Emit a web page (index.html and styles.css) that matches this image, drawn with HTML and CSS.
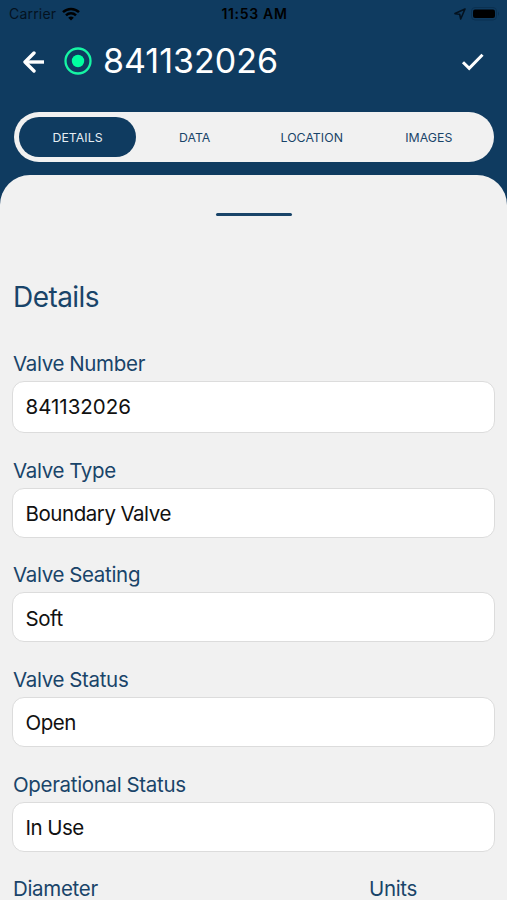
FILE: index.html
```html
<!DOCTYPE html>
<html lang="en">
<head>
<meta charset="utf-8">
<title>Valve 841132026</title>
<link rel="stylesheet" href="styles.css">
</head>
<body>
<div class="status-bar">
  <div class="carrier"><span>Carrier</span>
    <svg width="18" height="14" viewBox="0 0 18 14" fill="none" stroke="#000" stroke-width="2.5"><path d="M1 5.2C5.5.9 12.500.9 17 5.200M4 8.300C6.800 5.600 11.200 5.600 14 8.300"/><path d="M6.200 10.700Q9 8.300 11.800 10.700L9 13.600Z" fill="#000" stroke="none"/></svg>
  </div>
  <div class="clock">11:53 AM</div>
  <div class="indicators">
    <svg width="12" height="12" viewBox="0 0 12 12" fill="none" stroke="#04121f" stroke-width="1.600" stroke-linejoin="round"><path d="M11 1L1 5.600L5.700 6.300L6.700 11Z"/></svg>
    <svg class="battery" width="29" height="14" viewBox="0 0 29 14"><rect x=".5" y=".5" width="25" height="12.500" rx="3.500" fill="none" stroke="#0b3151"/><rect x="2" y="2.500" width="22" height="8.500" rx="2" fill="#000"/><path d="M27 4.500Q29 6.700 27 9Z" fill="#0b3151"/></svg>
  </div>
</div>
<header class="title-bar">
  <svg class="back" width="22" height="22" viewBox="0 0 22 22" fill="none" stroke="#fff" stroke-width="3.400" stroke-linecap="round" stroke-linejoin="round"><path d="M12 2L3 11L12 20"/><path d="M3.500 11H22" stroke-linecap="butt"/></svg>
  <svg class="state" width="28" height="30" viewBox="0 0 28 30"><circle cx="14" cy="14" r="12.500" fill="none" stroke="#16f5a4" stroke-width="2.300"/><circle cx="14" cy="14" r="6.200" fill="#00ffa0"/></svg>
  <h1>841132026</h1>
  <svg class="check" width="24" height="20" viewBox="0 0 24 20" fill="none" stroke="#fff" stroke-width="3"><path d="M2 10.200L8.200 16.300L21.500 2.700"/></svg>
</header>
<nav class="tabs">
  <a class="tab active">DETAILS</a><a class="tab">DATA</a><a class="tab">LOCATION</a><a class="tab">IMAGES</a>
</nav>
<main class="sheet">
  <div class="handle"></div>
  <h2>Details</h2>
  <div class="field first"><label>Valve Number</label><div class="value number">841132026</div></div>
  <div class="field"><label>Valve Type</label><div class="value">Boundary Valve</div></div>
  <div class="field"><label>Valve Seating</label><div class="value">Soft</div></div>
  <div class="field"><label>Valve Status</label><div class="value">Open</div></div>
  <div class="field"><label>Operational Status</label><div class="value">In Use</div></div>
  <div class="split"><label>Diameter</label><label>Units</label></div>
</main>
</body>
</html>
```
FILE: styles.css
```css
* { box-sizing: border-box; }
body {
  margin: 0;
  height: 900px;
  overflow: hidden;
  display: flex;
  flex-direction: column;
  background: #0f3b60;
  color: #194469;
  font-family: Inter, "Liberation Sans", sans-serif;
}
svg { display: block; flex: none; }
.status-bar {
  height: 27px;
  flex: none;
  display: grid;
  grid-template-columns: 1fr auto 1fr;
  align-items: center;
  padding: 0 7px 0 9px;
  color: #000;
  font-size: 14px;
}
.carrier { display: flex; align-items: center; gap: 6px; color: #04121f; }
.carrier span { letter-spacing: 0.2px; }
.clock { font-weight: 600; letter-spacing: 0.7px; }
.indicators { display: flex; justify-content: flex-end; align-items: center; gap: 5px; }
.title-bar {
  height: 85px;
  flex: none;
  display: flex;
  align-items: center;
  padding: 0 22px 16px;
}
.state { margin-left: 20px; }
h1 {
  margin: -2px auto 0 11px;
  color: #fff;
  font-size: 34px;
  line-height: 40px;
  font-weight: 400;
  letter-spacing: 0;
}
.tabs {
  height: 50px;
  flex: none;
  display: grid;
  grid-template-columns: repeat(4, 117.1px);
  margin: 0 13px 0 14px;
  padding: 5px;
  border-radius: 25px;
  background: #f1f1f1;
  font-size: 12.3px;
  letter-spacing: 0.05px;
}
.tab { display: flex; align-items: center; justify-content: center; border-radius: 20px; }
.active { background: #0f3b60; color: #e6edf3; }
.sheet {
  margin-top: 13px;
  height: 725px;
  flex: none;
  padding: 38px 12px 0;
  border-radius: 30px 30px 0 0;
  background: #f1f1f1;
}
.handle { width: 76px; height: 3px; margin: 0 auto; border-radius: 2px; background: #194469; }
h2 { margin: 63px 0 0 1px; font-size: 28px; line-height: 36px; font-weight: 400; letter-spacing: -0.55px; }
.field { margin-bottom: 24.67px; }
.field label, .split label {
  display: block;
  height: 30px;
  padding-left: 1px;
  font-size: 20.5px;
  line-height: 26px;
  letter-spacing: -0.32px;
  word-spacing: -0.4px;
}
.first { margin-top: 36px; }
.value {
  height: 50px;
  display: flex;
  align-items: center;
  padding: 2px 0 0 12.5px;
  border: 1px solid #dcdcdc;
  border-radius: 12px;
  background: #fff;
  color: #111;
  font-size: 20.5px;
  letter-spacing: -0.45px;
  word-spacing: -0.4px;
}
.number { height: 52px; padding: 0 0 2px 12.5px; letter-spacing: 0; }
.split { display: grid; grid-template-columns: 356px 1fr; }
```
